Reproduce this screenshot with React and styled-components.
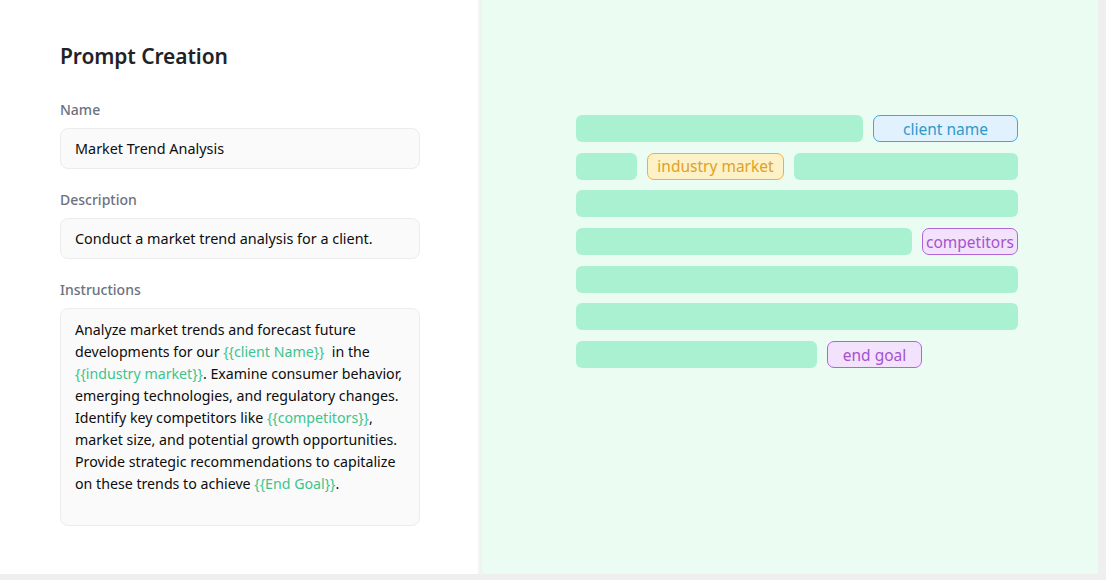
import styled, { createGlobalStyle } from "styled-components";

const GlobalStyle = createGlobalStyle`
    * {
        box-sizing: border-box;
    }

    body {
        margin: 0;
        background-color: #EFEFEF;
        font-family: 'Noto Sans', 'Open Sans', sans-serif;
    }
`;

const rows = [
    [{ bar: 287 }, { tag: "client name", kind: "blue", width: 145 }],
    [{ bar: 61 }, { tag: "industry market", kind: "yellow", width: 137 }, { bar: 224 }],
    [{ bar: 442 }],
    [{ bar: 336 }, { tag: "competitors", kind: "purple", width: 96 }],
    [{ bar: 442 }],
    [{ bar: 442 }],
    [{ bar: 241 }, { tag: "end goal", kind: "purple", width: 95 }],
];

const tagColors = {
    blue: { bg: "#E1F1FD", border: "#45A5D6", text: "#2E9ACB" },
    yellow: { bg: "#FDF1C8", border: "#E4B24C", text: "#DDA226" },
    purple: { bg: "#F2E2FB", border: "#B066D9", text: "#A652CF" },
};

export default function App() {
    return (
        <>
            <GlobalStyle />
            <Page>
                <Form>
                    <Title>Prompt Creation</Title>
                    <Field>
                        <Label>Name</Label>
                        <Input>Market Trend Analysis</Input>
                    </Field>
                    <Field>
                        <Label>Description</Label>
                        <Input>Conduct a market trend analysis for a client.</Input>
                    </Field>
                    <Field>
                        <Label>Instructions</Label>
                        <TextArea>
                            Analyze market trends and forecast future<br />
                            developments for our <Var>{"{{client Name}}"}</Var>&nbsp; in the<br />
                            <Var>{"{{industry market}}"}</Var>. Examine consumer behavior,<br />
                            emerging technologies, and regulatory changes.<br />
                            Identify key competitors like <Var>{"{{competitors}}"}</Var>,<br />
                            market size, and potential growth opportunities.<br />
                            Provide strategic recommendations to capitalize<br />
                            on these trends to achieve <Var>{"{{End Goal}}"}</Var>.
                        </TextArea>
                    </Field>
                </Form>
                <Divider />
                <Preview>
                    <Lines>
                        {rows.map((row, i) => (
                            <Row key={i}>
                                {row.map((item, j) => item.tag
                                    ? <Tag key={j} $kind={item.kind} $width={item.width}>{item.tag}</Tag>
                                    : <Bar key={j} $width={item.bar} />
                                )}
                            </Row>
                        ))}
                    </Lines>
                </Preview>
            </Page>
        </>
    );
}

const Page = styled.div`
    width: 1098px;
    height: 574px;
    display: flex;
    background-color: #FFFFFF;
`;

const Form = styled.div`
    width: 478px;
    padding: 42px 58px 0 60px;
    display: flex;
    flex-direction: column;
    gap: 21px;
`;

const Title = styled.h1`
    margin: 0 0 9px 0;
    font-size: 21px;
    font-weight: 600;
    color: #1F2328;
    letter-spacing: -0.1px;
`;

const Field = styled.div`
    display: flex;
    flex-direction: column;
    gap: 8px;
`;

const Label = styled.div`
    font-size: 14px;
    font-weight: 500;
    color: #6B7280;
    line-height: 20px;
`;

const Input = styled.div`
    height: 41px;
    padding: 0 14px;
    display: flex;
    align-items: center;
    background-color: #FAFAFA;
    border: 1px solid #ECECEC;
    border-radius: 8px;
    font-size: 14.4px;
    color: #0D0D0D;
`;

const TextArea = styled.div`
    height: 218px;
    padding: 10px 14px;
    background-color: #FAFAFA;
    border: 1px solid #ECECEC;
    border-radius: 8px;
    font-size: 14.2px;
    line-height: 22px;
    color: #0D0D0D;
    white-space: nowrap;
`;

const Var = styled.span`
    color: #3CC48E;
`;

const Divider = styled.div`
    width: 4px;
    background: linear-gradient(to right, #F4F6F5, #EDF3EF);
`;

const Preview = styled.div`
    flex: 1;
    background-color: #EBFCF3;
    padding: 115px 0 0 94px;
`;

const Lines = styled.div`
    display: flex;
    flex-direction: column;
    gap: 10.7px;
`;

const Row = styled.div`
    display: flex;
    gap: 10px;
    height: 27px;
`;

const Bar = styled.div`
    width: ${p => p.$width}px;
    height: 27px;
    background-color: #A9F1D1;
    border-radius: 6px;
`;

const Tag = styled.div`
    width: ${p => p.$width}px;
    height: 27px;
    display: flex;
    align-items: center;
    justify-content: center;
    background-color: ${p => tagColors[p.$kind].bg};
    border: 1.5px solid ${p => tagColors[p.$kind].border};
    color: ${p => tagColors[p.$kind].text};
    border-radius: 7px;
    font-size: 15.5px;
    font-weight: 400;
`;
